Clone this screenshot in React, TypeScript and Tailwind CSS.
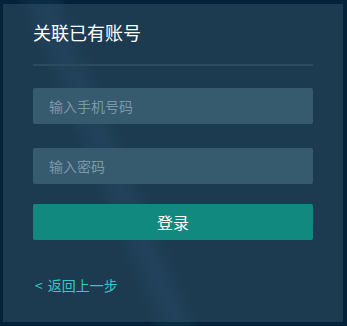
import { useState } from "react"

export default function App() {
  const [phone, setPhone] = useState("")
  const [password, setPassword] = useState("")

  return (
    <div className="w-[347px] h-[326px] bg-[#04233a] bg-[linear-gradient(67.5deg,transparent_31%,#0a2d44_34%,#0a2d44_39%,transparent_42%)] pt-[4px] pl-[3px] font-['Noto_Sans_CJK_SC','Noto_Sans',sans-serif]">
      <div className="w-[340px] h-[318px] bg-[#1c3b51] bg-[linear-gradient(67.5deg,transparent_31%,#1f4057_34%,#21425a_37%,#1f4057_39%,transparent_42%)] px-[30px] pt-[16px]">
        <h2 className="text-[18px] leading-[24px] text-white">关联已有账号</h2>
        <div className="mt-[20px] h-[2px] bg-[#2d4b5f]" />

        <input
          value={phone}
          onChange={e => setPhone(e.target.value)}
          placeholder="输入手机号码"
          className="mt-[22px] block w-full h-[36px] rounded-[2px] bg-[#365a6e] px-[16px] text-[14px] text-white placeholder:text-[#7b98aa] outline-none"
        />
        <input
          type="password"
          value={password}
          onChange={e => setPassword(e.target.value)}
          placeholder="输入密码"
          className="mt-[24px] block w-full h-[36px] rounded-[2px] bg-[#365a6e] px-[16px] text-[14px] text-white placeholder:text-[#7b98aa] outline-none"
        />
        <button className="mt-[20px] block w-full h-[36px] rounded-[2px] bg-[#12897f] text-[16px] text-white">
          登录
        </button>

        <a href="#" className="mt-[35px] flex items-center text-[14px] leading-[20px] text-[#33c9c9] pl-[2px]">
          <span className="mr-[5px]">&lt;</span>返回上一步
        </a>
      </div>
    </div>
  )
}
